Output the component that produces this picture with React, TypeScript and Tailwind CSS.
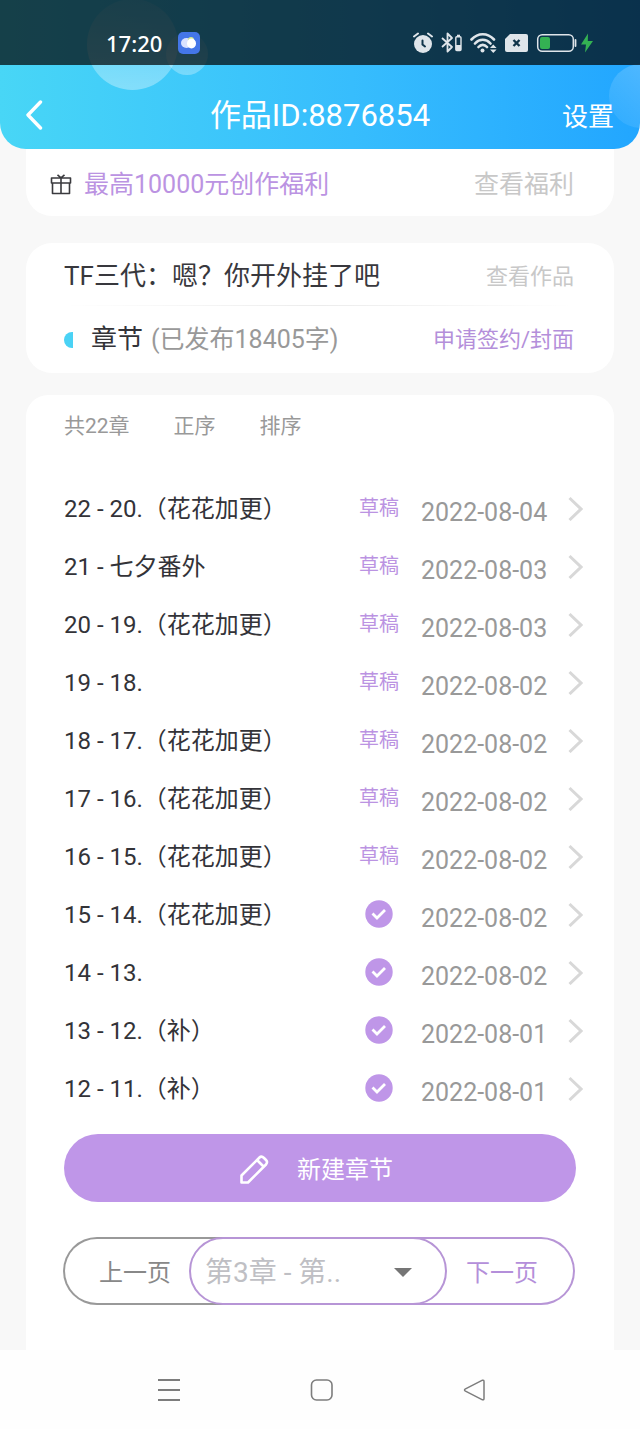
import React from 'react';

interface Chapter {
  order: number;
  title: string;
  date: string;
  published?: boolean;
}

const chapters: Chapter[] = [
  { order: 22, title: '20.（花花加更）', date: '2022-08-04' },
  { order: 21, title: '七夕番外', date: '2022-08-03' },
  { order: 20, title: '19.（花花加更）', date: '2022-08-03' },
  { order: 19, title: '18.', date: '2022-08-02' },
  { order: 18, title: '17.（花花加更）', date: '2022-08-02' },
  { order: 17, title: '16.（花花加更）', date: '2022-08-02' },
  { order: 16, title: '15.（花花加更）', date: '2022-08-02' },
  { order: 15, title: '14.（花花加更）', date: '2022-08-02', published: true },
  { order: 14, title: '13.', date: '2022-08-02', published: true },
  { order: 13, title: '12.（补）', date: '2022-08-01', published: true },
  { order: 12, title: '11.（补）', date: '2022-08-01', published: true },
];

const StatusIcons: React.FC = () => (
  <div className="flex items-center text-[#dfe5ea]">
    {/* alarm */}
    <svg width="20" height="22" viewBox="0 0 20 22" fill="none">
      <circle cx="10" cy="12" r="9" fill="currentColor" />
      <path d="M1 4.5 5 1.5M19 4.5 15 1.5" stroke="currentColor" strokeWidth="2" strokeLinecap="round" />
      <path d="M9.5 8.5V12.5L12 14.5" stroke="#11354a" strokeWidth="2" strokeLinecap="round" />
    </svg>
    {/* bluetooth with device battery */}
    <svg className="ml-2" width="21" height="22" viewBox="0 0 21 22" fill="none" stroke="currentColor">
      <path d="M1 6 11 15 6.5 19.5V1.5L11 6 1 15" strokeWidth="1.8" strokeLinejoin="round" />
      <rect x="14.8" y="4.8" width="5.2" height="13.7" rx="1" strokeWidth="1.4" />
      <path d="M16 3.5h3" strokeWidth="1.6" />
      <path d="M15 13h5v5h-5z" fill="currentColor" stroke="none" />
    </svg>
    {/* wifi */}
    <svg className="ml-2" width="27" height="22" viewBox="0 0 27 22" fill="none" stroke="currentColor" strokeWidth="2.6">
      <path d="M1.5 7.5C8 .5 17.5 .5 24 7.5M5 11.5C9.5 6.5 16 6.5 20.5 11.5M8.5 15C11 12.2 14.5 12.2 17 15" strokeLinecap="round" />
      <circle cx="12.5" cy="18.500" r="2" fill="currentColor" stroke="none" />
      <path d="M20 16 23.300 12.500 26.600 16ZM20 17.500 23.300 21 26.600 17.500Z" fill="currentColor" stroke="none" />
    </svg>
    {/* sim missing */}
    <svg className="ml-2" width="23" height="20" viewBox="0 0 23 20">
      <path d="M5 1H21a2 2 0 0 1 2 2V17a2 2 0 0 1-2 2H2a2 2 0 0 1-2-2V6Z" fill="currentColor" />
      <path d="m8.500 7 6 6m0-6-6 6" stroke="#11354a" strokeWidth="2.400" />
    </svg>
    {/* battery */}
    <svg className="ml-2" width="41" height="20" viewBox="0 0 41 20" fill="none">
      <rect x="1.700" y="1.700" width="35.600" height="16.600" rx="4.500" stroke="currentColor" strokeWidth="1.500" />
      <rect x="4" y="4" width="10" height="12" rx="2" fill="#34b253" />
      <path d="M39.500 7v6" stroke="currentColor" strokeWidth="1.800" strokeLinecap="round" />
    </svg>
    <svg className="ml-1" width="12" height="20" viewBox="0 0 12 20" fill="#34b253">
      <path d="M7 .500 0 11.500H5L4 19.500 12 8H6.800Z" />
    </svg>
  </div>
);

const Header: React.FC = () => (
  <header className="relative overflow-hidden rounded-b-[26px] bg-linear-to-r from-[#48d6f6] via-[#37bdfd] via-55% to-[#22a6ff] text-white">
    <span className="absolute -top-px left-[87px] size-[91px] rounded-full bg-linear-to-b from-white/10 to-white/35" />
    <span className="absolute left-[166px] top-[33px] size-[42px] rounded-full bg-linear-to-b from-white/10 to-white/30" />
    <span className="absolute -right-[33px] top-16 size-16 rounded-full bg-linear-to-tr from-white/5 to-white/25" />

    <div className="relative flex h-[65px] items-center justify-between bg-black/70 pl-[106px] pr-[47px] pt-5">
      <div className="flex items-center gap-4">
        <span className="font-['Noto_Sans',sans-serif] text-[22px] font-medium leading-6">17:20</span>
        <svg width="22" height="22" viewBox="0 0 22 22">
          <rect width="22" height="22" rx="5" fill="#4476e8" />
          <ellipse cx="8.500" cy="11" rx="5.500" ry="5" fill="#d9e2ff" />
          <circle cx="13" cy="8" r="3" fill="#d5e88a" />
          <ellipse cx="13.500" cy="11.500" rx="4.500" ry="5" fill="#fff" />
        </svg>
      </div>
      <StatusIcons />
    </div>

    <div className="relative grid h-[84px] grid-cols-[1fr_auto_1fr] items-center px-[26px] pt-4">
      <button type="button" aria-label="返回" className="justify-self-start">
        <svg width="17" height="30" viewBox="0 0 17 30" fill="none" stroke="currentColor" strokeWidth="3.400" strokeLinecap="round" strokeLinejoin="round">
          <path d="M14.500 2 2 15 14.500 28" />
        </svg>
      </button>
      <h1 className="pt-0.5 text-[31px] leading-9">作品ID:8876854</h1>
      <button type="button" className="justify-self-end pt-1 text-[26px] leading-8">设置</button>
    </div>
  </header>
);

const ChapterRow: React.FC<{ chapter: Chapter }> = ({ chapter }) => (
  <li>
    <a href="#" className="flex h-[58px] items-center">
      <span className="flex-1 pt-0.5 text-2xl text-[#333338]">
        {chapter.order} - {chapter.title}
      </span>
      <span className="flex w-[42px] justify-center text-xl text-[#bb93e2]">
        {chapter.published ? (
          <svg width="28" height="28" viewBox="0 0 28 28" role="img" aria-label="已发布">
            <circle cx="14" cy="14" r="13.700" fill="#bf96e8" />
            <path d="m7.500 13.500 4.500 4.500 8-8" fill="none" stroke="#fff" strokeWidth="2.800" />
          </svg>
        ) : (
          '草稿'
        )}
      </span>
      <time className="ml-[21px] w-[130px] pt-2.5 text-[25px] text-[#999]">{chapter.date}</time>
      <svg className="ml-[17px]" width="15" height="26" viewBox="0 0 15 26" fill="none" stroke="#d8d8d8" strokeWidth="3">
        <path d="M1.500 3 13 14 1.500 25" />
      </svg>
    </a>
  </li>
);

const Pager: React.FC = () => (
  <div className="-ml-px mr-px mt-[35px] flex h-[68px] text-2xl">
    <button type="button" className="w-[162px] rounded-l-full border-2 border-r-0 border-[#999] pr-5 pt-1 text-[#888]">
      上一页
    </button>
    <div className="relative z-10 -ml-9 flex-1">
      <select
        aria-label="选择章节"
        className="size-full appearance-none rounded-full border-2 border-[#b795d6] bg-white pl-3.5 pt-1 text-[28px] text-[#bfbfc4]"
      >
        <option>第3章 - 第..</option>
      </select>
      <svg className="pointer-events-none absolute right-[35px] top-[31px]" width="18" height="9" viewBox="0 0 18 9">
        <path d="M0 0H18L9 9Z" fill="#757575" />
      </svg>
    </div>
    <button type="button" className="-ml-9 w-[164px] rounded-r-full border-2 border-l-0 border-[#b795d6] pl-5 pt-1 text-[#b48fda]">
      下一页
    </button>
  </div>
);

const NavBar: React.FC = () => (
  <nav className="flex h-[79px] items-center justify-between bg-[#fefefe] pl-[157px] pr-[153px] text-[#7d7d7d]">
    <button type="button" aria-label="最近任务">
      <svg width="24" height="24" viewBox="0 0 24 24" stroke="currentColor" strokeWidth="1.800">
        <path d="M1 2h22M1 12h22M1 22h22" />
      </svg>
    </button>
    <button type="button" aria-label="主屏幕">
      <svg width="24" height="24" viewBox="0 0 24 24" fill="none" stroke="currentColor" strokeWidth="1.600">
        <rect x="1.500" y="2" width="20.500" height="20" rx="5" />
      </svg>
    </button>
    <button type="button" aria-label="返回上一级">
      <svg width="24" height="24" viewBox="0 0 24 24" fill="none" stroke="currentColor" strokeWidth="1.500" strokeLinejoin="round">
        <path d="M19.500 2.200 2.500 10.800Q.500 12 2.500 13.200L19.500 21.800Q21 22 21 20.500V3.500Q21 2 19.500 2.200Z" />
      </svg>
    </button>
  </nav>
);

const App: React.FC = () => {
  return (
    <div className="flex min-h-screen flex-col bg-[#f8f8f8] font-[Roboto,'Noto_Sans_CJK_SC',sans-serif]">
      <Header />

      <main className="flex flex-1 flex-col px-[26px]">
        <section className="flex h-[67px] items-center justify-between rounded-b-[26px] bg-white pl-6 pr-10 pt-1 text-[25px]">
          <div className="flex items-center gap-3">
            <svg width="22" height="22" viewBox="0 0 22 22" fill="none" stroke="#3a3a3e" strokeWidth="1.600" strokeLinejoin="round">
              <path d="M1.500 4H20.500V9H1.500ZM2.500 9V19.500H19.500V9M11 4V19.500M7.500 .800 11 3.800 14.500 .800" />
            </svg>
            <span className="text-[#bb93e2]">最高10000元创作福利</span>
          </div>
          <a href="#" className="text-[#c8c8c8]">查看福利</a>
        </section>

        <section className="mt-[27px] rounded-[26px] bg-white pl-[38px] pr-10">
          <div className="flex h-[62px] items-center justify-between pt-1">
            <h2 className="text-[26px] text-[#38383d]">TF三代：嗯？你开外挂了吧</h2>
            <a href="#" className="text-[22px] text-[#c8c8c8]">查看作品</a>
          </div>
          <div className="h-px bg-linear-to-r from-transparent via-[#ececec] to-transparent" />
          <div className="flex h-[67px] items-center justify-between">
            <div className="flex items-center">
              <span className="h-4 w-[9px] rounded-l-full bg-[#4ad2f5]" />
              <h3 className="ml-[18px] text-[26px] text-[#333338]">章节</h3>
              <span className="ml-2 text-[25px] text-[#999]">(已发布18405字)</span>
            </div>
            <a href="#" className="text-[22px] text-[#b48fda]">申请签约/封面</a>
          </div>
        </section>

        <section className="mt-[22px] flex-1 rounded-t-[22px] bg-white px-[38px] pb-[45px]">
          <div className="flex h-[62px] items-center gap-11 pt-0.5 text-[21px] text-[#999]">
            <span>共22章</span>
            <button type="button">正序</button>
            <button type="button">排序</button>
          </div>

          <ul className="-mr-[7px] mt-[22px]">
            {chapters.map((chapter) => (
              <ChapterRow key={chapter.order} chapter={chapter} />
            ))}
          </ul>

          <button
            type="button"
            className="mt-[17px] flex h-[68px] w-full items-center justify-center gap-7 rounded-full bg-[#bf96e8] pr-2 pt-1 text-2xl text-white"
          >
            <svg width="30" height="30" viewBox="0 0 30 30" fill="none" stroke="currentColor" strokeWidth="2.600" strokeLinejoin="round">
              <path d="M2.500 27.500V20.500L20.500 2.500Q22.500 .500 25 3L27 5Q29 7 27 9.500L9 27.500ZM18 5 25 12" />
            </svg>
            新建章节
          </button>

          <Pager />
        </section>
      </main>

      <NavBar />
    </div>
  );
};

export default App;
